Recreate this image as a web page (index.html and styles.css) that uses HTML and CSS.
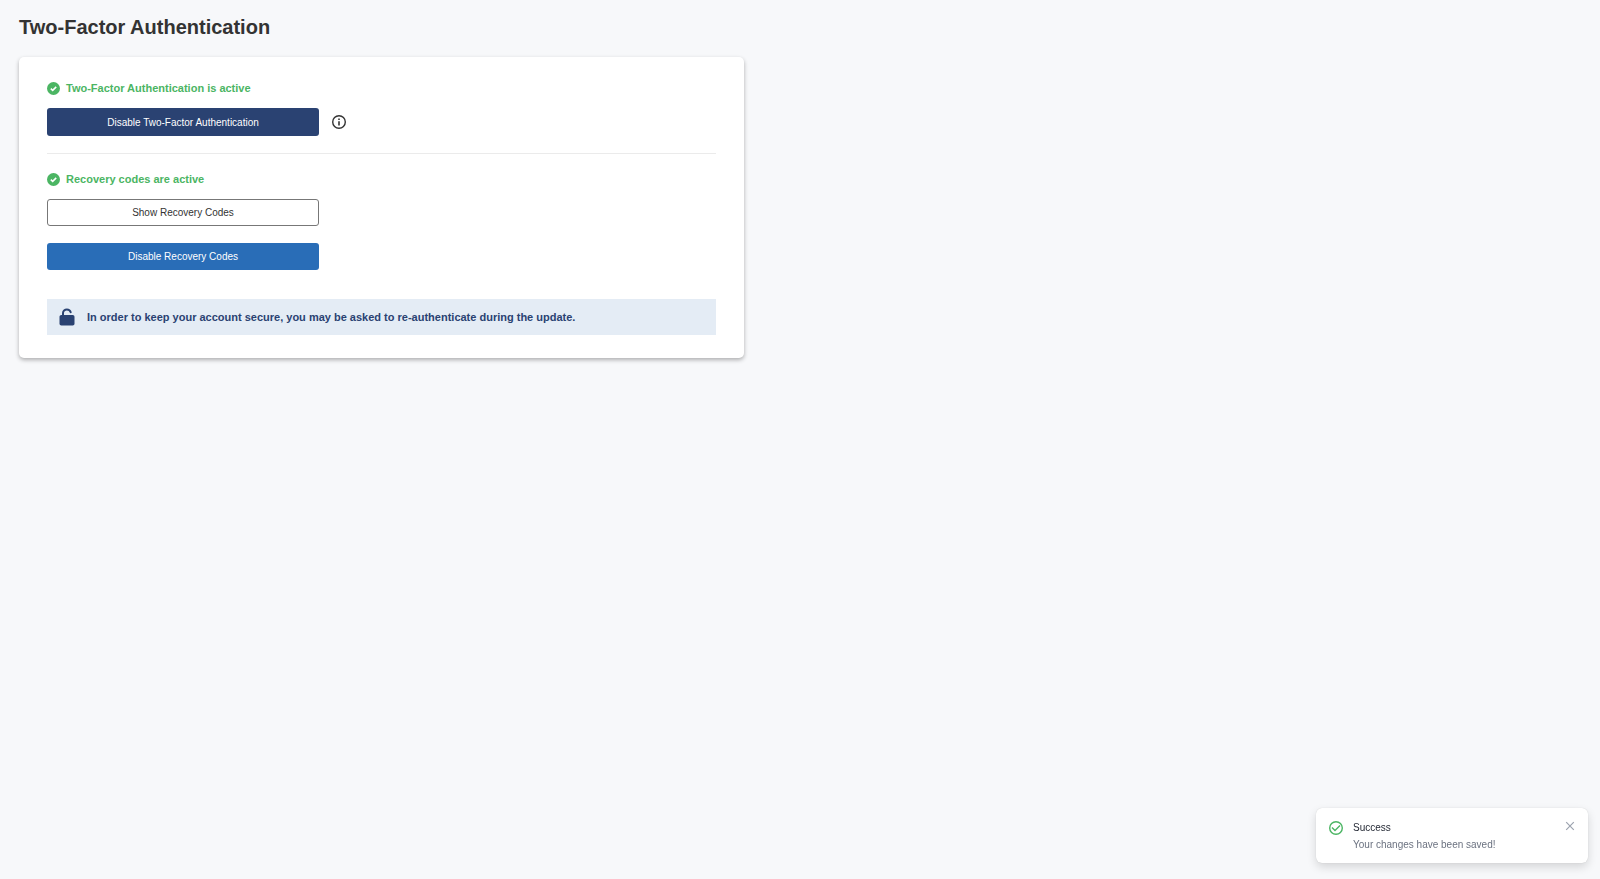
FILE: index.html
```html
<!DOCTYPE html>
<html lang="en">
<head>
<meta charset="utf-8">
<meta name="viewport" content="width=device-width, initial-scale=1">
<title>Two-Factor Authentication</title>
<link rel="stylesheet" href="styles.css">
</head>
<body>
<main class="page">
  <h1 class="page-title">Two-Factor Authentication</h1>
  <div class="card">
    <section class="section">
      <h2 class="status">
        <svg class="status-icon" viewBox="0 0 24 24" aria-hidden="true"><circle cx="12" cy="12" r="12" fill="currentColor"/><path d="M7 12.300l3.500 3.200 6.500-6.500" fill="none" stroke="#fff" stroke-width="2.800"/></svg>
        Two-Factor Authentication is active
      </h2>
      <div class="action-row">
        <button class="btn btn-navy" type="button">Disable Two-Factor Authentication</button>
        <button class="icon-btn info" type="button" aria-label="More information">
          <svg viewBox="0 0 14 14" aria-hidden="true"><circle cx="7" cy="7" r="6.300" fill="none" stroke="currentColor" stroke-width="1.400"/><path fill="currentColor" d="M6.200 3.500h1.600v1.500H6.200zM6.200 6.200h1.600v4.300H6.200z"/></svg>
        </button>
      </div>
    </section>
    <section class="section">
      <h2 class="status">
        <svg class="status-icon" viewBox="0 0 24 24" aria-hidden="true"><circle cx="12" cy="12" r="12" fill="currentColor"/><path d="M7 12.300l3.500 3.200 6.500-6.500" fill="none" stroke="#fff" stroke-width="2.800"/></svg>
        Recovery codes are active
      </h2>
      <div class="action-stack">
        <button class="btn btn-outline" type="button">Show Recovery Codes</button>
        <button class="btn btn-blue" type="button">Disable Recovery Codes</button>
      </div>
    </section>
    <p class="notice">
      <svg class="notice-icon" viewBox="0 0 16 18" aria-hidden="true"><rect x="0.500" y="7" width="15" height="10.500" rx="1.800" fill="currentColor"/><path d="M4 8V4.900C4 2.900 5.700 1.400 7.900 1.400c1.900 0 3.300 1 3.800 2.800" fill="none" stroke="currentColor" stroke-width="2" stroke-linecap="round"/></svg>
      In order to keep your account secure, you may be asked to re-authenticate during the update.
    </p>
  </div>
</main>
<div class="toast" role="status">
  <svg class="toast-icon" viewBox="0 0 14 14" fill="none" stroke="currentColor" aria-hidden="true"><circle cx="7" cy="7" r="6.300" stroke-width="1.400"/><path d="M3 6.500l3 3 5-5" stroke-width="1.400"/></svg>
  <div class="toast-body">
    <p class="toast-title">Success</p>
    <p class="toast-text">Your changes have been saved!</p>
  </div>
  <button class="icon-btn close" type="button" aria-label="Close">
    <svg viewBox="0 0 10 10" fill="none" stroke="currentColor" stroke-width="1.200" aria-hidden="true"><path d="M1.200 1.200l7.600 7.600M8.800 1.200L1.200 8.800"/></svg>
  </button>
</div>
</body>
</html>
```
FILE: styles.css
```css
* { box-sizing: border-box; }

body {
  margin: 0;
  background: #f7f8fa;
  color: #333;
  font-family: "Liberation Sans", Arial, sans-serif;
}

h1, h2, p { margin: 0; }

svg { display: block; flex: none; }

.page { padding: 15px 19px; }

.page-title {
  margin-bottom: 18px;
  font-size: 20px;
  line-height: 24px;
}

.card {
  max-width: 725px;
  padding: 22px 28px 23px;
  border-radius: 5px;
  background: #fff;
  box-shadow: 0 2px 4px rgba(0, 0, 0, 0.3);
}

.section + .section {
  margin-top: 17px;
  padding-top: 16px;
  border-top: 1px solid #ebebeb;
}

.status {
  display: flex;
  align-items: center;
  gap: 6px;
  margin-bottom: 11px;
  color: #4bb563;
  font-size: 11px;
  line-height: 18px;
}

.status-icon { width: 13px; height: 13px; }

.action-row {
  display: flex;
  align-items: center;
  gap: 13px;
}

.action-stack {
  display: flex;
  flex-direction: column;
  gap: 17px;
}

.btn {
  width: 100%;
  max-width: 272px;
  padding: 6px 12px;
  border: 1px solid transparent;
  border-radius: 3px;
  font: 10px/13px "Liberation Sans", Arial, sans-serif;
  cursor: pointer;
}

.btn-navy { padding-top: 7px; background: #2a4272; color: #fff; }
.btn-blue { background: #296db7; color: #fff; }
.btn-outline { border-color: #777; background: #fff; color: #333; }

.icon-btn {
  flex: none;
  padding: 0;
  border: 0;
  background: none;
  cursor: pointer;
}

.info { color: #333; }
.info svg { width: 14px; height: 14px; }

.notice {
  display: flex;
  align-items: center;
  gap: 12px;
  margin-top: 29px;
  padding: 9px 12px;
  background: #e4ecf5;
  color: #2a4272;
  font-size: 11px;
  font-weight: bold;
  line-height: 18px;
}

.notice-icon { width: 16px; height: 18px; }

.toast {
  position: fixed;
  right: 12px;
  bottom: 16px;
  display: flex;
  align-items: flex-start;
  gap: 10px;
  width: 272px;
  padding: 13px 13px 11px;
  border-radius: 6px;
  background: #fff;
  box-shadow: 0 0 1px rgba(0, 0, 0, 0.2), 0 4px 10px rgba(0, 0, 0, 0.14);
}

.toast-icon { width: 14px; height: 14px; color: #4bb563; }

.toast-body {
  flex: 1;
  font-size: 10px;
  line-height: 14px;
}

.toast-title { margin-bottom: 3px; color: #1f2430; }
.toast-text { color: #6b7280; }

.close { color: #9ca3af; }
.close svg { width: 10px; height: 10px; }
```
